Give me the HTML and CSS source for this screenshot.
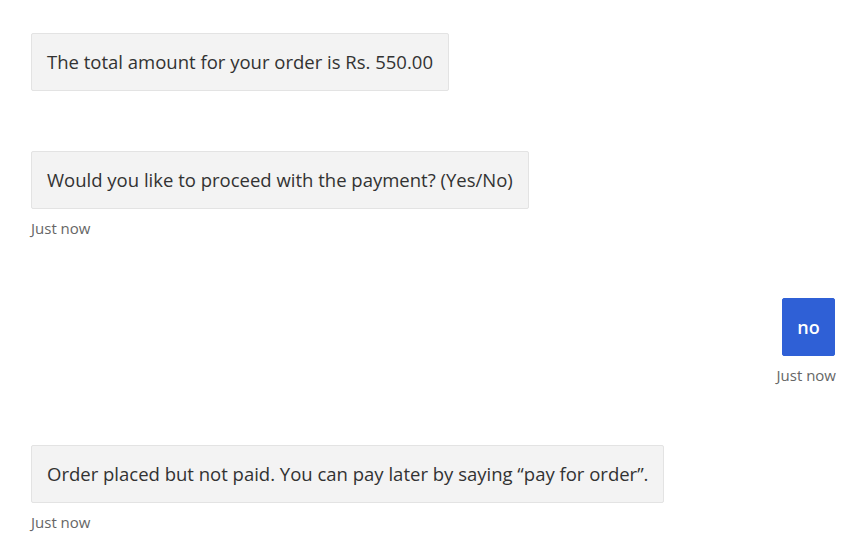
FILE: index.html
```html
<!DOCTYPE html>
<html>
<head>
<meta charset="utf-8">
<link rel="stylesheet" href="styles.css">
</head>
<body>
<div class="chat">
  <div class="msg bot">
    <div class="bubble">The total amount for your order is Rs. 550.00</div>
  </div>
  <div class="msg bot">
    <div class="bubble">Would you like to proceed with the payment? (Yes/No)</div>
    <div class="meta">Just now</div>
  </div>
  <div class="msg user">
    <div class="bubble user-bubble">no</div>
    <div class="meta">Just now</div>
  </div>
  <div class="msg bot">
    <div class="bubble">Order placed but not paid. You can pay later by saying “pay for order”.</div>
    <div class="meta">Just now</div>
  </div>
</div>
</body>
</html>
```

FILE: styles.css
```css
html, body {
  margin: 0;
  padding: 0;
  background: #ffffff;
}
body {
  font-family: "Open Sans", "Noto Sans", sans-serif;
  color: #323232;
}
.chat {
  display: flex;
  flex-direction: column;
  gap: 60px;
  padding: 33px 27px 0 31px;
}
.msg {
  display: flex;
  flex-direction: column;
  align-items: flex-start;
}
.msg.user {
  align-items: flex-end;
}
.bubble {
  background: #f3f3f3;
  border: 1px solid #e3e3e3;
  border-radius: 2px;
  padding: 16px 15px;
  font-size: 18.5px;
  line-height: 24px;
}
.user-bubble {
  background: #2f60d6;
  border-color: #2f60d6;
  color: #ffffff;
  font-weight: 600;
  padding: 16px 14px;
  width: 23px;
  text-align: center;
  font-size: 18px;
}
.meta {
  margin-top: 10px;
  font-size: 15px;
  line-height: 19px;
  color: #666666;
}
.msg.user .meta {
  margin-right: -1px;
}
```
